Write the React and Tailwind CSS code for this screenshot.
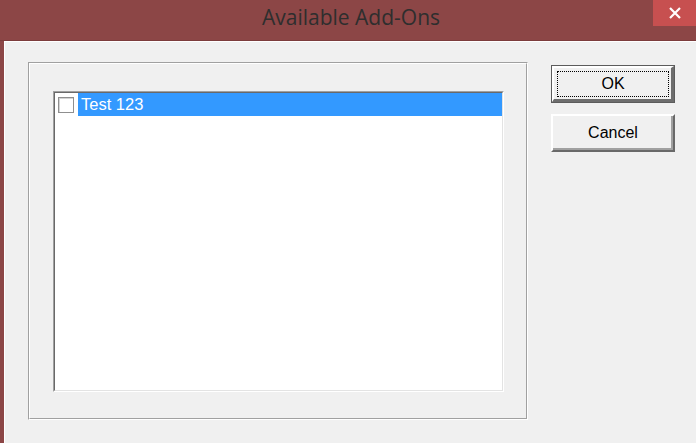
import React from 'react';

const sans = { fontFamily: '"Liberation Sans", Arial, sans-serif' };

function Checkbox() {
  return <div className="w-4 h-4 bg-white border border-[#8f8f8f] shadow-[inset_1px_1px_0_#d4d4d4]" />;
}

function DialogButton({ label, isDefault }) {
  if (isDefault) {
    return (
      <button className="relative w-[124px] h-[38px] border border-[#5c5c5c] bg-[#f0f0f0]" style={sans}>
        <div className="absolute inset-0 border-t-2 border-l-2 border-t-white border-l-white border-b-[3px] border-r-[3px] border-b-[#6d6d6d] border-r-[#6d6d6d]" />
        <div className="absolute inset-[5px] border border-dotted border-black" />
        <span className="relative text-[16px] text-black">{label}</span>
      </button>
    );
  }
  return (
    <button className="relative w-[124px] h-[38px] bg-[#f0f0f0] border-t-2 border-l-2 border-t-white border-l-white border-b-2 border-r-2 border-b-[#696969] border-r-[#696969] shadow-[inset_-2px_-2px_0_#a0a0a0]" style={sans}>
      <span className="text-[16px] text-black">{label}</span>
    </button>
  );
}

export default function App() {
  return (
    <div className="w-[696px] h-[443px] bg-[#8c4646] flex flex-col overflow-hidden">
      {/* title bar */}
      <div className="relative h-[41px] shrink-0 border-b border-[#7c3c3c] flex items-center justify-center">
        <span className="text-[21px] text-[#2e2e2e] -mt-[4px] ml-[6px]" style={{ fontFamily: '"Open Sans", "Noto Sans", sans-serif' }}>
          Available Add-Ons
        </span>
        <div className="absolute right-0 top-0 w-[43px] h-[26px] bg-[#c75050] flex items-center justify-center">
          <svg width="12" height="12" viewBox="0 0 12 12">
            <path d="M1 1 L11 11 M11 1 L1 11" stroke="white" strokeWidth="2.2" />
          </svg>
        </div>
      </div>

      {/* body */}
      <div className="ml-[4px] flex-1 bg-[#f0f0f0] border-t border-l border-white flex items-start pl-[23px] pt-[20px]">
        {/* group box */}
        <div className="w-[500px] h-[358px] border border-t-[#a0a0a0] border-l-[#a0a0a0] border-b-white border-r-white shrink-0">
          <div className="w-full h-full border border-t-white border-l-white border-b-[#a0a0a0] border-r-[#a0a0a0] pl-[23px] pt-[27px]">
            {/* list box */}
            <div className="w-[451px] h-[301px] border border-t-[#a0a0a0] border-l-[#a0a0a0] border-b-white border-r-white">
              <div className="w-full h-full bg-white border border-t-[#696969] border-l-[#696969] border-b-[#e3e3e3] border-r-[#e3e3e3]">
                <div className="flex items-center h-[23px]" style={sans}>
                  <div className="w-[23px] pl-[3px] flex items-center">
                    <Checkbox />
                  </div>
                  <div className="flex-1 h-full bg-[#3399ff] text-white text-[16.5px] leading-[23px] pl-[3px]">
                    Test 123
                  </div>
                </div>
              </div>
            </div>
          </div>
        </div>

        {/* buttons */}
        <div className="ml-[23px] mt-[3px] flex flex-col gap-[11px]">
          <DialogButton label="OK" isDefault />
          <DialogButton label="Cancel" />
        </div>
      </div>
    </div>
  );
}
